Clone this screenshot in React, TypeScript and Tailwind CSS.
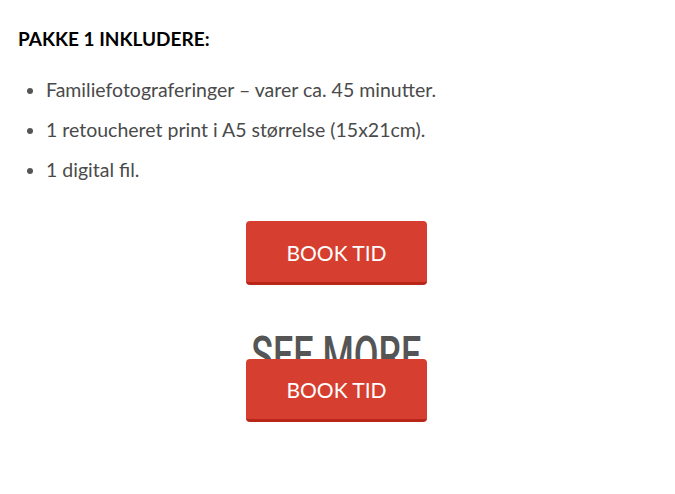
export default function App() {
  const items = [
    'Familiefotograferinger – varer ca. 45 minutter.',
    '1 retoucheret print i A5 størrelse (15x21cm).',
    '1 digital fil.',
  ];

  return (
    <div className="min-h-[494px] bg-white font-['Lato',sans-serif]">
      <div className="px-[18px] pt-[27px]">
        <h3 className="text-[19px] leading-[24px] font-bold text-black">PAKKE 1 INKLUDERE:</h3>

        <ul className="mt-[28px] list-disc pl-[28px] text-[19.5px] leading-[22px] text-[#4a4a4a] marker:text-[#555]">
          {items.map((item) => (
            <li key={item} className="mb-[18px]">{item}</li>
          ))}
        </ul>

        <div className="mt-[40px] mr-[2px] flex flex-col items-center">
          <a className="flex h-[64px] w-[181px] items-center justify-center rounded-[4px] border-b-[3px] border-[#b8261a] bg-[#d63f2f] pt-[2px] text-[21px] text-white">
            BOOK TID
          </a>

          <h2 className="mt-[45px] h-[52px] scale-x-[0.69] font-['Roboto',sans-serif] text-[52px] leading-[52px] font-medium text-[#555]">
            SEE MORE
          </h2>

          <a className="relative z-10 mt-[-23px] flex h-[63px] w-[181px] items-center justify-center rounded-[4px] border-b-[3px] border-[#b8261a] bg-[#d63f2f] pt-[2px] text-[21px] text-white">
            BOOK TID
          </a>
        </div>
      </div>
    </div>
  );
}
